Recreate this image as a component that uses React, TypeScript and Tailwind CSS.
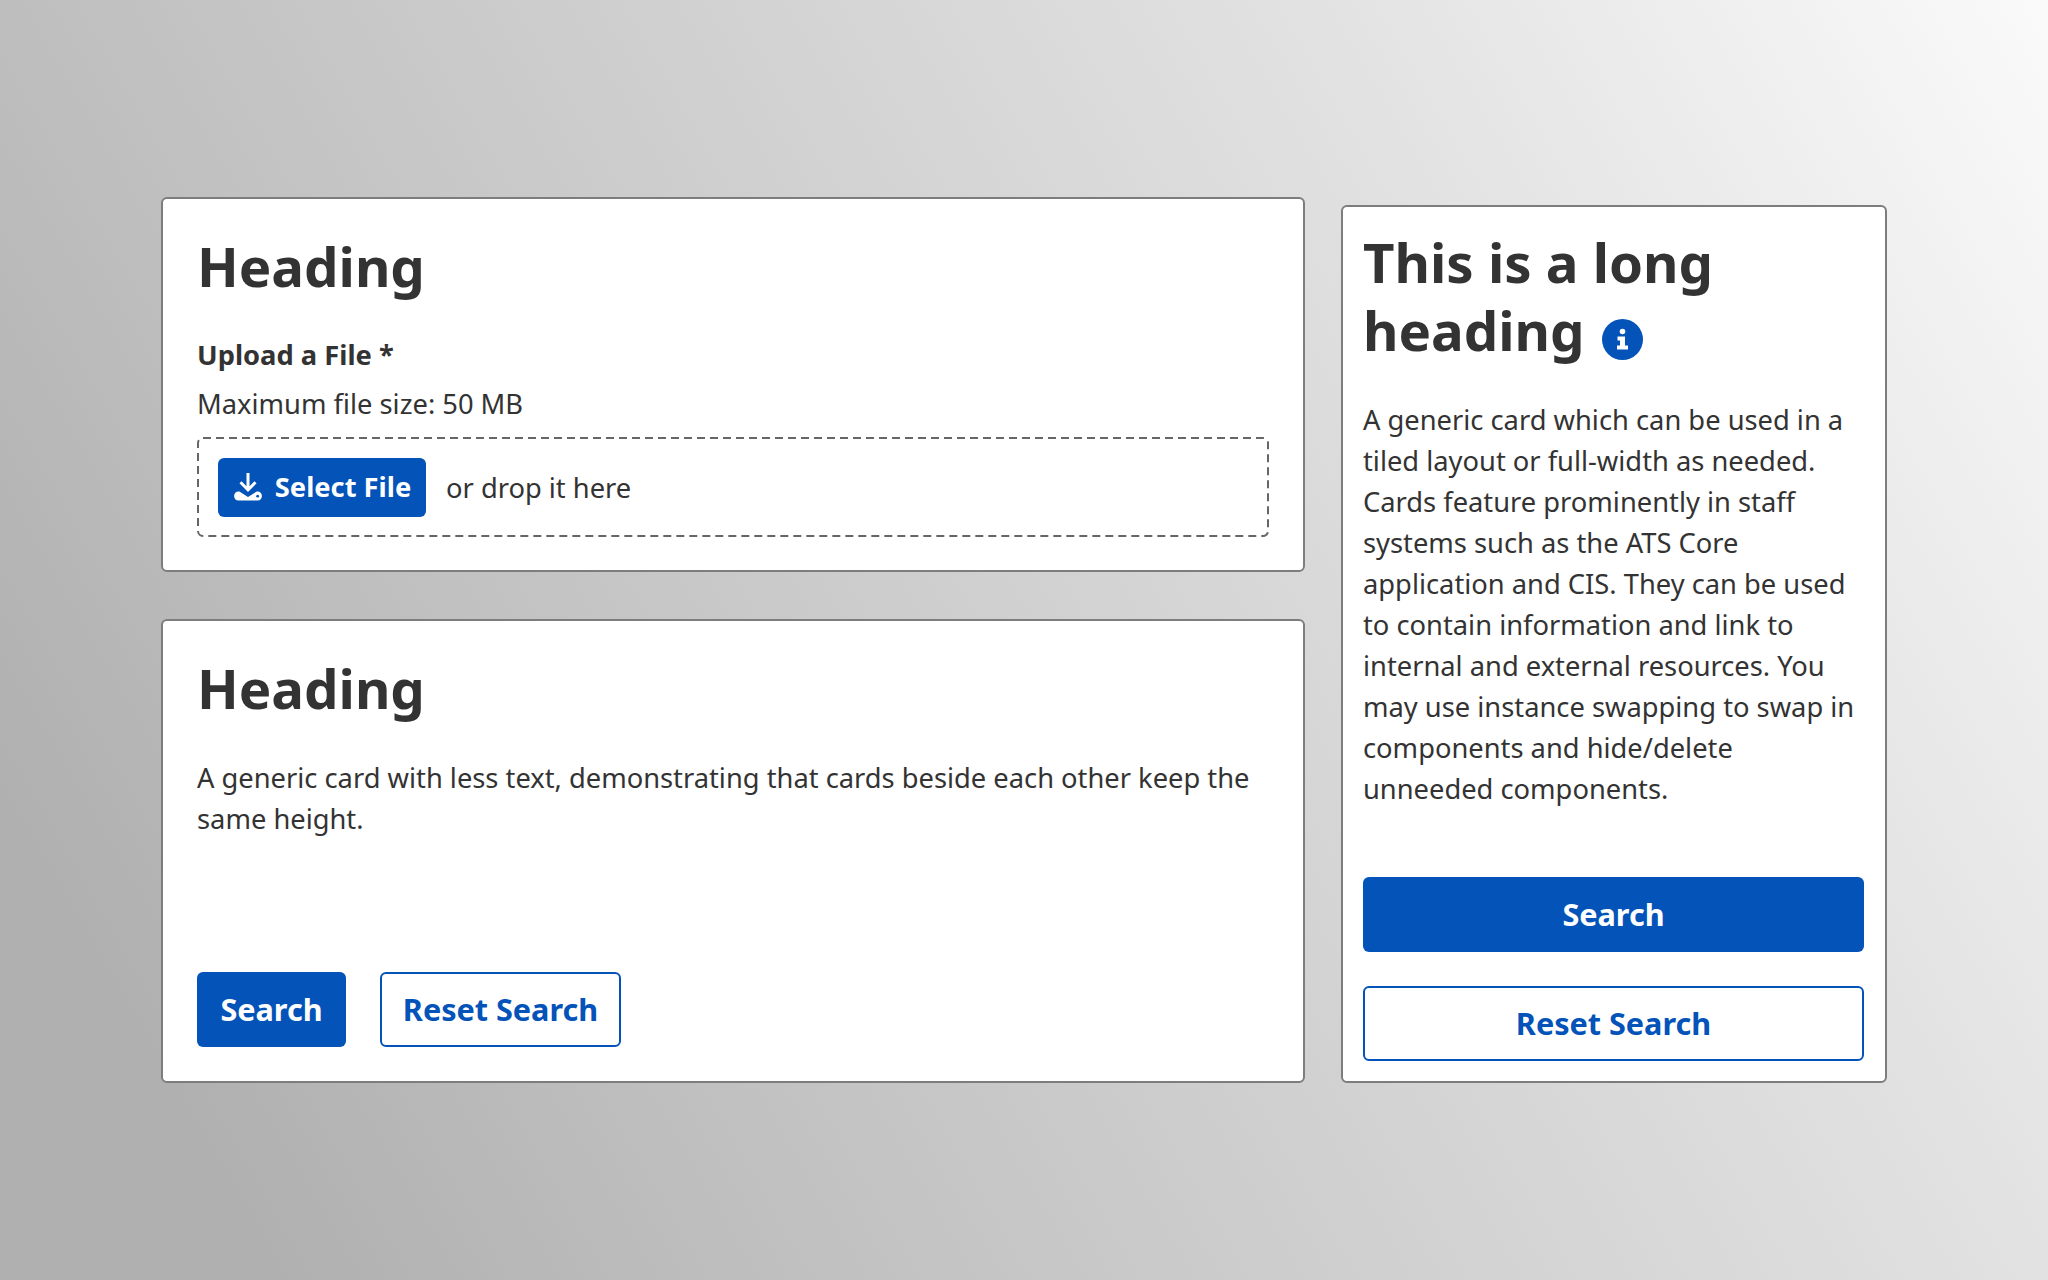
import React from 'react';

const font = '[font-family:"Noto_Sans",sans-serif]';

const PrimaryButton: React.FC<{ className?: string; children: React.ReactNode }> = ({ className = '', children }) => (
  <button className={`h-[75px] rounded-[6px] bg-[#0353b9] text-[30.6px] font-bold text-white flex items-center justify-center ${className}`}>
    {children}
  </button>
);

const SecondaryButton: React.FC<{ className?: string; children: React.ReactNode }> = ({ className = '', children }) => (
  <button className={`h-[75px] rounded-[6px] border-2 border-[#0353b9] bg-white text-[30.6px] font-bold text-[#0353b9] flex items-center justify-center ${className}`}>
    {children}
  </button>
);

const DownloadIcon = () => (
  <svg width="30" height="30" viewBox="0 0 28 28" fill="white" aria-hidden="true">
    <path d="M12.6 1h2.8v12.2l4.6-4.6 2 2-8 8-8-8 2-2 4.600 4.600z" />
    <path d="M1 22.500c0-2.400 1.800-4.200 4.200-4.200h.8l8 5 8-5h.8c2.400 0 4.200 1.800 4.200 4.200 0 2.300-1.700 4.200-4 4.200H5c-2.300 0-4-1.900-4-4.200z" />
    <circle cx="23" cy="22.600" r="1.300" fill="#0353b9" />
  </svg>
);

const InfoIcon = () => (
  <svg width="41" height="41" viewBox="0 0 41 41" className="shrink-0" aria-hidden="true">
    <circle cx="20.500" cy="20.500" r="20.500" fill="#0353b9" />
    <circle cx="20.500" cy="12.500" r="2.800" fill="white" />
    <path d="M15.500 17.500h7.500v9h3v4h-11v-4h3v-5h-2.500z" fill="white" />
  </svg>
);

export default function App() {
  return (
    <div className={`${font} h-[1280px] w-full bg-[linear-gradient(60deg,#b0b0b0_0%,#b0b0b0_10%,#bebebe_26.5%,#e2e2e2_73.5%,#fafafa_100%)] flex items-center justify-center text-[#333333]`}>
      <div className="flex items-end gap-[36px]">
        <div className="flex w-[1144px] flex-col gap-[47px]">
          <section className="rounded-[6px] border-2 border-[#7d7d7d] bg-white px-[34px] pt-[33px] pb-[33px]">
            <h2 className="text-[54.6px] leading-[68px] font-bold">Heading</h2>
            <p className="mt-[34px] text-[27.3px] leading-[41px] font-bold">Upload a File *</p>
            <p className="mt-[8px] text-[27.3px] leading-[41px]">Maximum file size: 50 MB</p>
            <div className="relative mt-[13px] flex h-[100px] items-center gap-[20px] pl-[21px]">
              <svg className="absolute inset-0" width="1072" height="100" fill="none" aria-hidden="true">
                <rect x="1" y="1" width="1070" height="98" rx="5" stroke="#666666" strokeWidth="2" strokeDasharray="8 5" />
              </svg>
              <button className="relative flex h-[59px] w-[208px] items-center justify-center gap-[12px] rounded-[6px] bg-[#0353b9] text-[27.3px] font-bold text-white">
                <DownloadIcon />
                Select File
              </button>
              <span className="relative text-[27.3px] leading-[41px]">or drop it here</span>
            </div>
          </section>

          <section className="flex h-[464px] flex-col rounded-[6px] border-2 border-[#7d7d7d] bg-white px-[34px] pt-[33px] pb-[34px]">
            <h2 className="text-[54.6px] leading-[68px] font-bold">Heading</h2>
            <p className="mt-[35px] text-[27.3px] leading-[41px]">
              A generic card with less text, demonstrating that cards beside each other keep the same height.
            </p>
            <div className="mt-auto flex gap-[34px]">
              <PrimaryButton className="w-[149px]">Search</PrimaryButton>
              <SecondaryButton className="w-[241px]">Reset Search</SecondaryButton>
            </div>
          </section>
        </div>

        <section className="flex w-[546px] flex-col rounded-[6px] border-2 border-[#7d7d7d] bg-white pl-[20px] pr-[21px] pt-[21px] pb-[20px]">
          <h2 className="text-[54.6px] leading-[68px] font-bold">
            This is a long
            <br />
            <span className="inline-flex items-center gap-[17px]">
              heading
              <span className="mt-[18px]"><InfoIcon /></span>
            </span>
          </h2>
          <p className="mt-[35px] text-[27.3px] leading-[41px]">
            A generic card which can be used in a tiled layout or full-width as needed. Cards feature prominently in staff systems such as the ATS Core application and CIS. They can be used to contain information and link to internal and external resources. You may use instance swapping to swap in components and hide/delete unneeded components.
          </p>
          <PrimaryButton className="mt-[68px] w-full">Search</PrimaryButton>
          <SecondaryButton className="mt-[34px] w-full">Reset Search</SecondaryButton>
        </section>
      </div>
    </div>
  );
}
